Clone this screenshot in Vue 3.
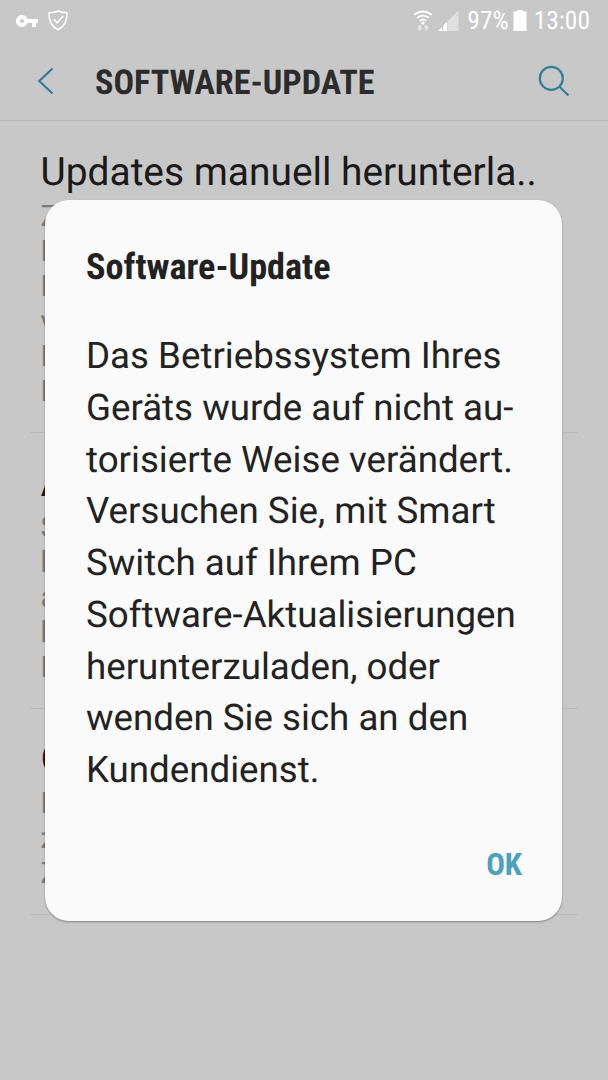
<template>
  <div class="screen">
    <header class="status-bar">
      <div class="status-left">
        <svg class="icon-key" viewBox="0 0 22 14" width="22" height="14">
          <path fill-rule="evenodd" d="M6 1a6 6 0 1 0 5.6 8H16v4h4V9h2V5H11.6A6 6 0 0 0 6 1Zm0 4a2 2 0 1 1 0 4a2 2 0 1 1 0-4Z" />
        </svg>
        <svg class="icon-shield" viewBox="0 0 20 21" width="20" height="21">
          <path d="M10 1C7 2.2 4 2.8 1 2.8C.8 11 3 16.5 10 19.7C17 16.5 19.2 11 19 2.8C16 2.8 13 2.2 10 1Z" />
          <path d="M6 9.3l3.2 3.5L15.2 5.8" />
        </svg>
      </div>
      <div class="status-right">
        <svg class="icon-wifi" viewBox="0 0 20 22" width="20" height="22">
          <path class="arc" d="M1.3 4.8C6.3.4 13.7.4 18.7 4.8M4.100 7.900C7.500 4.800 12.500 4.800 15.900 7.900M6.900 10.800C8.800 9.200 11.200 9.200 13.100 10.800" />
          <circle cx="10" cy="13" r="1.6" />
          <path class="arrows" d="M5.400 15h2.600v3h1.600L6.700 21.300L3.800 18h1.600ZM12.200 20.500h2.600v-2.800h1.600L13.500 14.400L10.600 17.700h1.600Z" />
        </svg>
        <svg class="icon-signal" viewBox="0 0 21 21" width="21" height="21">
          <path class="dim" d="M9.800 11L20.500 .3V21H9.800Z" />
          <path d="M.5 20.500L4 17V21H.5ZM5.200 15.800L9.200 11.800V21H5.200Z" />
        </svg>
        <span class="battery-level">97%</span>
        <svg class="icon-battery" viewBox="0 0 14 21" width="14" height="21">
          <path d="M4 0h6v1.500h3.500V21H.500V1.500H4Z" />
        </svg>
        <span class="clock">13:00</span>
      </div>
    </header>

    <nav class="app-bar">
      <button class="icon-btn back" aria-label="Zurück">
        <svg viewBox="0 0 18 28" width="18" height="28">
          <path d="M16.500 1.500L3.300 14L16.500 26.500" />
        </svg>
      </button>
      <h1>SOFTWARE-UPDATE</h1>
      <button class="icon-btn search" aria-label="Suchen">
        <svg viewBox="0 0 32 32" width="32" height="32">
          <circle cx="13.300" cy="13.400" r="11.500" />
          <path d="M21.500 21.800L30.500 30.500" />
        </svg>
      </button>
    </nav>

    <main class="settings">
      <section v-for="item in items" :key="item.title" class="setting">
        <h2>{{ item.title }}</h2>
        <p v-for="(line, i) in item.lines" :key="i">{{ line }}</p>
      </section>
    </main>

    <div v-if="isOpen" class="modal-overlay">
      <div class="modal" role="dialog">
        <h2 class="modal-title">Software-Update</h2>
        <p class="modal-text">
          <template v-for="line in message" :key="line">{{ line }}<br /></template>
        </p>
        <div class="modal-footer">
          <button class="btn-ok" @click="isOpen = false">OK</button>
        </div>
      </div>
    </div>
  </div>
</template>

<script setup>
import { ref } from 'vue';

const isOpen = ref(true);

// Only the first letters show beside the dialog
const items = [
  { title: 'Updates manuell herunterla..', lines: ['Z', 'H', 'E', 'v', 'F', 'E'] },
  { title: 'A', lines: ['S', 'h', 'a', 'b', 'N'] },
  { title: 'G', lines: ['E', 'z', 'Z'] }
];

const message = [
  'Das Betriebssystem Ihres',
  'Geräts wurde auf nicht au-',
  'torisierte Weise verändert.',
  'Versuchen Sie, mit Smart',
  'Switch auf Ihrem PC',
  'Software-Aktualisierungen',
  'herunterzuladen, oder',
  'wenden Sie sich an den',
  'Kundendienst.'
];
</script>

<style>
body {
  background: #c8c8c8;
}
</style>

<style scoped>
.screen {
  position: relative;
  width: 608px;
  height: 1080px;
  overflow: hidden;
  background: #c8c8c8;
  font-family: Roboto, sans-serif;
  color: #222;
  text-rendering: geometricPrecision;
}

h1,
h2,
p {
  margin: 0;
  white-space: nowrap;
}

button {
  padding: 0;
  border: none;
  background: none;
  cursor: pointer;
}

svg {
  display: block;
  flex: none;
}

.status-bar {
  display: flex;
  justify-content: space-between;
  height: 42px;
  padding: 0 18px 0 16px;
  box-sizing: border-box;
  color: #fff;
  fill: #fff;
}

.status-left,
.status-right {
  display: flex;
  align-items: center;
  padding-bottom: 1px;
}

.icon-shield {
  margin-left: 10px;
  fill: none;
  stroke: #fff;
  stroke-width: 1.5;
}

.icon-wifi .arc {
  fill: none;
  stroke: #fff;
  stroke-width: 1.9;
}

.icon-wifi .arrows {
  fill: #e4e4e4;
}

.icon-signal {
  margin-left: 5px;
}

.icon-signal .dim {
  fill: #e0e0e0;
}

.battery-level,
.clock {
  margin-top: 1px;
  font-family: "Roboto Condensed", Roboto, sans-serif;
  font-stretch: 75%;
  font-size: 25.5px;
}

.battery-level {
  margin-left: 8px;
}

.icon-battery {
  margin-left: 4px;
}

.clock {
  margin-left: 7px;
}

.app-bar {
  display: flex;
  align-items: center;
  height: 79px;
  padding: 0 38px 1px 36px;
  box-sizing: border-box;
  border-bottom: 1px solid #b4b4b4;
}

.icon-btn svg {
  fill: none;
  stroke: #327e9c;
  stroke-width: 2.2;
}

.app-bar h1 {
  margin: 4px 0 0 41px;
  font-family: "Roboto Condensed", Roboto, sans-serif;
  font-stretch: 75%;
  font-size: 34.2px;
  font-weight: 700;
  color: #2c2c2c;
}

.search {
  margin-left: auto;
}

.settings {
  padding: 1px 30px 0;
}

.setting {
  padding: 26px 10px 22px 10.5px;
  border-bottom: 1px solid #bababa;
}

.setting h2 {
  margin-bottom: 2px;
  font-size: 38.9px;
  font-weight: 400;
  line-height: 50px;
  color: #1a1a1a;
}

.setting p {
  font-size: 29.5px;
  line-height: 35px;
  color: #7b7b7b;
}

.modal-overlay {
  position: absolute;
  inset: 0;
}

.modal {
  width: 517px;
  height: 721px;
  margin: 200px 0 0 45px;
  padding: 43px 40px 0 41px;
  box-sizing: border-box;
  border-radius: 24px;
  background: #fafafa;
  box-shadow: 0 1px 2px rgba(0, 0, 0, 0.35);
}

.modal-title {
  font-family: "Roboto Condensed", Roboto, sans-serif;
  font-stretch: 75%;
  font-size: 36.2px;
  font-weight: 700;
  line-height: 48px;
  color: #222;
}

.modal-text {
  margin-top: 39px;
  font-size: 36.7px;
  line-height: 51.75px;
}

.modal-footer {
  display: flex;
  justify-content: flex-end;
  margin-top: 48px;
}

.btn-ok {
  font-family: "Roboto Condensed", Roboto, sans-serif;
  font-stretch: 75%;
  font-size: 31px;
  font-weight: 700;
  line-height: 42px;
  color: #4ba0be;
}
</style>
